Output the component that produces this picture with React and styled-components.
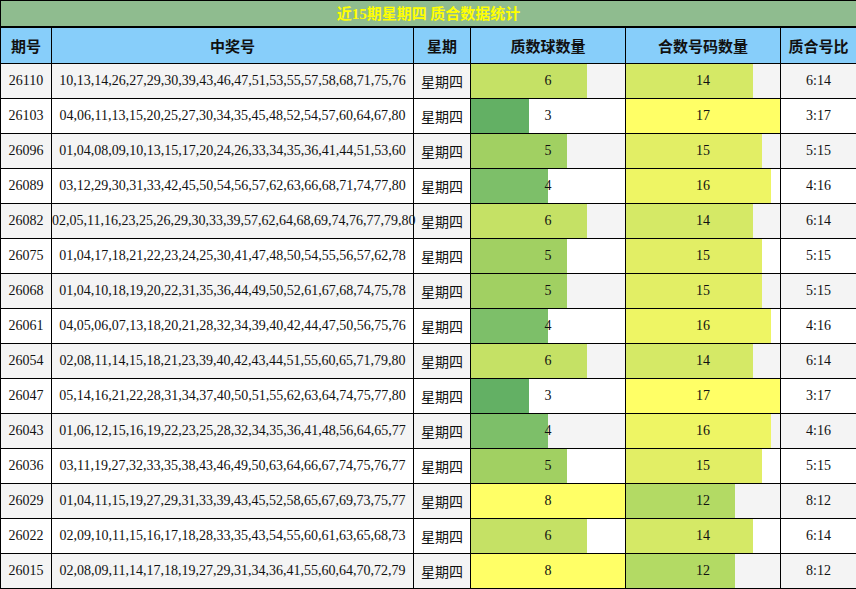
import React from 'react';
import styled, { createGlobalStyle } from 'styled-components';

const Global = createGlobalStyle`
  body { margin: 0; background: #fff; }
`;

const rows = [
  ['26110', '10,13,14,26,27,29,30,39,43,46,47,51,53,55,57,58,68,71,75,76', 6, 14],
  ['26103', '04,06,11,13,15,20,25,27,30,34,35,45,48,52,54,57,60,64,67,80', 3, 17],
  ['26096', '01,04,08,09,10,13,15,17,20,24,26,33,34,35,36,41,44,51,53,60', 5, 15],
  ['26089', '03,12,29,30,31,33,42,45,50,54,56,57,62,63,66,68,71,74,77,80', 4, 16],
  ['26082', '02,05,11,16,23,25,26,29,30,33,39,57,62,64,68,69,74,76,77,79,80', 6, 14],
  ['26075', '01,04,17,18,21,22,23,24,25,30,41,47,48,50,54,55,56,57,62,78', 5, 15],
  ['26068', '01,04,10,18,19,20,22,31,35,36,44,49,50,52,61,67,68,74,75,78', 5, 15],
  ['26061', '04,05,06,07,13,18,20,21,28,32,34,39,40,42,44,47,50,56,75,76', 4, 16],
  ['26054', '02,08,11,14,15,18,21,23,39,40,42,43,44,51,55,60,65,71,79,80', 6, 14],
  ['26047', '05,14,16,21,22,28,31,34,37,40,50,51,55,62,63,64,74,75,77,80', 3, 17],
  ['26043', '01,06,12,15,16,19,22,23,25,28,32,34,35,36,41,48,56,64,65,77', 4, 16],
  ['26036', '03,11,19,27,32,33,35,38,43,46,49,50,63,64,66,67,74,75,76,77', 5, 15],
  ['26029', '01,04,11,15,19,27,29,31,33,39,43,45,52,58,65,67,69,73,75,77', 8, 12],
  ['26022', '02,09,10,11,15,16,17,18,28,33,35,43,54,55,60,61,63,65,68,73', 6, 14],
  ['26015', '02,08,09,11,14,17,18,19,27,29,31,34,36,41,55,60,64,70,72,79', 8, 12],
];

const primeColor = { 3: '#63b064', 4: '#7dbf69', 5: '#a1d062', 6: '#c5e165', 8: '#ffff66' };
const compColor = { 12: '#b3da64', 14: '#d5e966', 15: '#e2ee65', 16: '#eef564', 17: '#ffff66' };

const Table = styled.table`
  border-collapse: collapse;
  width: 856px;
  table-layout: fixed;
  font-family: "Liberation Serif", "Noto Sans CJK SC", serif;
  font-size: 14px;
  color: #111;
`;

const Title = styled.th`
  background: #8fbc8f;
  color: #ffff00;
  font-family: "Noto Sans CJK SC", sans-serif;
  font-size: 15px;
  font-weight: bold;
  height: 24px;
  padding: 0;
  border: 1px solid #000;
  line-height: 24px;
  & span { font-family: "Liberation Serif", serif; }
`;

const Head = styled.th`
  background: #87cefa;
  font-family: "Noto Sans CJK SC", sans-serif;
  font-size: 15px;
  font-weight: bold;
  height: 35px;
  padding: 0;
  border: 1px solid #000;
  border-top-width: 2px;
`;

const Row = styled.tr`
  background: ${p => (p.$alt ? '#f4f4f4' : '#fff')};
`;

const Cell = styled.td`
  height: 34px;
  padding: 0;
  border: 1px solid #000;
  text-align: center;
  font-family: ${p => (p.$cjk ? '"Noto Sans CJK SC", sans-serif' : '"Liberation Serif", serif')};
  white-space: nowrap;
`;

const BarWrap = styled.div`
  position: relative;
  height: 34px;
  display: flex;
  align-items: center;
  justify-content: center;
`;

const Bar = styled.div`
  position: absolute;
  left: 0;
  top: 0;
  bottom: 0;
  background: ${p => p.$color};
`;

const BarText = styled.span`
  position: relative;
`;

const BarCell = ({ value, max, color }) => (
  <Cell>
    <BarWrap>
      <Bar $color={color} style={{ width: `${(value / max) * 100}%` }} />
      <BarText>{value}</BarText>
    </BarWrap>
  </Cell>
);

export default function App() {
  return (
    <>
      <Global />
      <Table>
        <colgroup>
          <col style={{ width: 51 }} />
          <col style={{ width: 362 }} />
          <col style={{ width: 57 }} />
          <col style={{ width: 155 }} />
          <col style={{ width: 155 }} />
          <col style={{ width: 76 }} />
        </colgroup>
        <thead>
          <tr>
            <Title colSpan={6}>近<span>15</span>期星期四 质合数据统计</Title>
          </tr>
          <tr>
            <Head>期号</Head>
            <Head>中奖号</Head>
            <Head>星期</Head>
            <Head>质数球数量</Head>
            <Head>合数号码数量</Head>
            <Head>质合号比</Head>
          </tr>
        </thead>
        <tbody>
          {rows.map(([id, nums, p, c], i) => (
            <Row key={id} $alt={i % 2 === 0}>
              <Cell>{id}</Cell>
              <Cell>{nums}</Cell>
              <Cell $cjk>星期四</Cell>
              <BarCell value={p} max={8} color={primeColor[p]} />
              <BarCell value={c} max={17} color={compColor[c]} />
              <Cell>{p}:{c}</Cell>
            </Row>
          ))}
        </tbody>
      </Table>
    </>
  );
}
